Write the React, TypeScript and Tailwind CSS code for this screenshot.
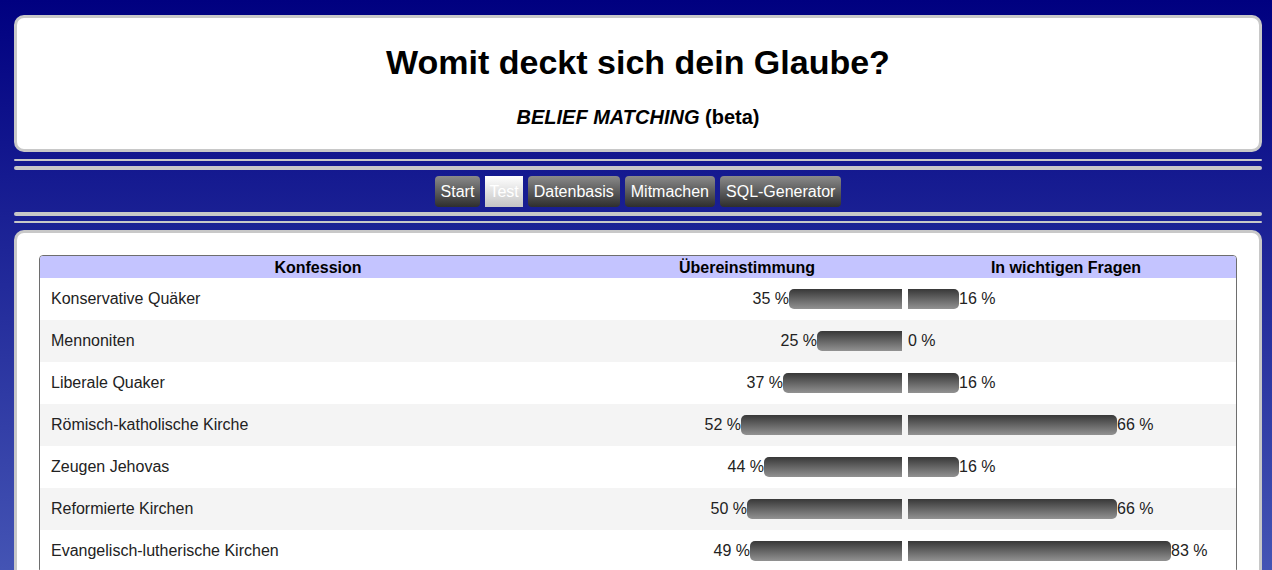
import React from 'react';

interface Row {
  name: string;
  match: number;
  important: number;
}

const rows: Row[] = [
  { name: 'Konservative Quäker', match: 35, important: 16 },
  { name: 'Mennoniten', match: 25, important: 0 },
  { name: 'Liberale Quaker', match: 37, important: 16 },
  { name: 'Römisch-katholische Kirche', match: 52, important: 66 },
  { name: 'Zeugen Jehovas', match: 44, important: 16 },
  { name: 'Reformierte Kirchen', match: 50, important: 66 },
  { name: 'Evangelisch-lutherische Kirchen', match: 49, important: 83 },
];

const navItems = ['Start', 'Test', 'Datenbasis', 'Mitmachen', 'SQL-Generator'];

const Divider: React.FC<{ reverse?: boolean }> = ({ reverse }) => (
  <div className={`flex gap-[5px] ${reverse ? 'flex-col-reverse' : 'flex-col'}`}>
    <div className="h-[2px] rounded-full bg-[#c8c8c8]" />
    <div className="h-[4px] rounded-full bg-[#c8c8c8]" />
  </div>
);

export default function App() {
  return (
    <div className="h-screen overflow-hidden bg-[linear-gradient(to_bottom,#000080,#4454b4)] pl-[14px] pr-[10px] pt-[15px] font-['Liberation_Sans',Arial,sans-serif]">
      {/* title box */}
      <div className="h-[137px] rounded-[10px] border-[3px] border-[#c8c8c8] bg-white pt-[24px] text-center text-black">
        <h1 className="text-[34px] font-bold leading-[40px]">Womit deckt sich dein Glaube?</h1>
        <p className="mt-[23px] text-[20px] font-bold leading-[24px]">
          <i>BELIEF MATCHING</i> (beta)
        </p>
      </div>

      <div className="mt-[7px]">
        <Divider />
      </div>

      <nav className="mt-[6px] flex justify-center gap-[5px]">
        {navItems.map((item) => (
          <a
            key={item}
            className={`flex h-[31px] items-center text-[16px] text-white ${
              item === 'Test'
                ? 'px-[4px] bg-[linear-gradient(to_bottom,#ffffff,#c4c4c4)]'
                : 'px-[6px] rounded-[4px] bg-[linear-gradient(to_bottom,#8a8a8a,#2e2e2e)]'
            }`}
          >
            {item}
          </a>
        ))}
      </nav>

      <div className="mt-[5px]">
        <Divider reverse />
      </div>

      {/* results box */}
      <div className="mt-[7px] rounded-[10px] border-[3px] border-[#c8c8c8] bg-white px-[22px] pt-[22px] pb-[30px]">
        <div className="overflow-hidden rounded-[4px] border border-[#6e6e6e] text-[16px] text-[#222]">
          <div className="grid h-[22px] grid-cols-[550px_314px_1fr] items-center bg-[#c4c4ff] font-bold text-black">
            <div className="pl-[6px] text-center">Konfession</div>
            <div className="text-center">Übereinstimmung</div>
            <div className="pr-[8px] text-center">In wichtigen Fragen</div>
          </div>
          {rows.map((r, i) => (
            <div
              key={r.name}
              className={`grid h-[42px] grid-cols-[550px_314px_1fr] items-center ${i % 2 ? 'bg-[#f4f4f4]' : 'bg-white'}`}
            >
              <div className="pl-[11px]">{r.name}</div>
              <div className="flex items-center justify-end pr-[2px]">
                <span>{r.match} %</span>
                <div
                  className="h-[20px] rounded-l-[5px] bg-[linear-gradient(to_bottom,#383838,#929292)]"
                  style={{ width: Math.round(2.81 * r.match + 14.6) }}
                />
              </div>
              <div className="flex items-center pl-[4px]">
                {r.important > 0 && (
                  <div
                    className="h-[20px] rounded-r-[5px] bg-[linear-gradient(to_bottom,#383838,#929292)]"
                    style={{ width: Math.round(3.164 * r.important) }}
                  />
                )}
                <span>{r.important} %</span>
              </div>
            </div>
          ))}
        </div>
      </div>
    </div>
  );
}
